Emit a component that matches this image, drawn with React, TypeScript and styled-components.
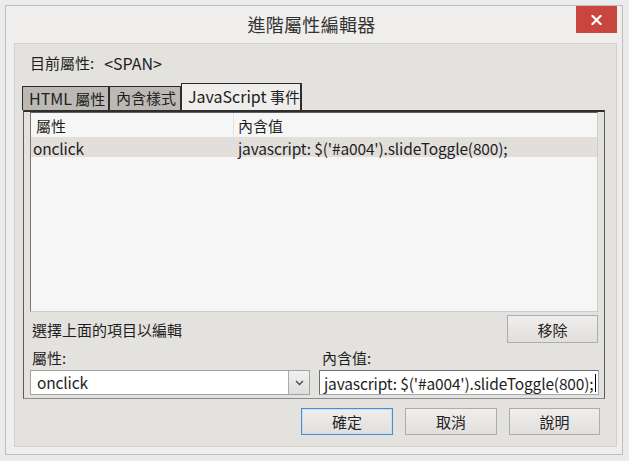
import React from "react";
import styled, { createGlobalStyle } from "styled-components";

const GlobalStyle = createGlobalStyle`
  html, body { margin: 0; padding: 0; }
  body {
    background: #ebebeb;
    font-family: "Noto Sans CJK TC", "Noto Sans", sans-serif;
    color: #1e1e1e;
  }
  * { box-sizing: border-box; }
`;

const Page = styled.div`
  width: 629px;
  height: 461px;
  padding: 5px 0 0 5px;
  overflow: hidden;
`;

const Window = styled.div`
  width: 618px;
  height: 450px;
  border: 1px solid #bdbdbd;
  background: #efeeec;
  display: flex;
  flex-direction: column;
`;

const TitleBar = styled.div`
  height: 37px;
  display: grid;
  grid-template-columns: 1fr auto 1fr;
  align-items: start;
  padding-right: 5px;
`;

const Title = styled.div`
  grid-column: 2;
  font-size: 18px;
  line-height: 37px;
  color: #333;
  letter-spacing: 0.3px;
`;

const CloseButton = styled.div`
  grid-column: 3;
  justify-self: end;
  width: 41px;
  height: 27px;
  background: #c8463d;
  display: flex;
  align-items: center;
  justify-content: center;
`;

const Client = styled.div`
  flex: 1;
  margin: 0 5px 7px 8px;
  background: #e4e2df;
  border: 1px solid #d3d1ce;
  display: flex;
  flex-direction: column;
`;

const CurrentLine = styled.div`
  margin-top: 8px;
  padding-left: 15px;
  height: 22px;
  line-height: 22px;
  font-size: 15px;
  display: flex;
  gap: 10px;
`;

const TagText = styled.span`
  font-size: 16px;
`;

const TabStrip = styled.div`
  margin-top: 9px;
  margin-left: 7px;
  height: 27px;
  display: flex;
  align-items: flex-end;
`;

const Tab = styled.div<{ $active?: boolean; $w: number }>`
  width: ${(p) => p.$w}px;
  height: ${(p) => (p.$active ? 27 : 24)}px;
  background: ${(p) => (p.$active ? "#efeeec" : "#bcb9b5")};
  border: 1px solid #2c2c2c;
  border-right-width: 2px;
  border-bottom: none;
  margin-right: -1px;
  font-size: 15px;
  line-height: ${(p) => (p.$active ? 25 : 22)}px;
  padding-left: 6px;
  color: #202020;
  white-space: nowrap;
  position: relative;
  z-index: ${(p) => (p.$active ? 1 : 0)};
`;

const TabLatin = styled.span`
  font-size: 16px;
`;

const Panel = styled.div`
  margin-left: 8px;
  width: 582px;
  border-top: 2px solid #2e2e2e;
  border-left: 1px solid #5a5a5a;
  border-right: 1px solid #5a5a5a;
  border-bottom: 1px solid #8c8c8c;
  padding: 0 6px 3px 6px;
  display: flex;
  flex-direction: column;
`;

const List = styled.div`
  height: 200px;
  background: #f6f6f6;
  border-top: 1px solid #5e5e5e;
  border-left: 1px solid #7a7a7a;
  border-right: 1px solid #cdcdcd;
  border-bottom: 1px solid #cdcdcd;
  display: flex;
  flex-direction: column;
`;

const ListRow = styled.div<{ $selected?: boolean; $h: number }>`
  display: grid;
  grid-template-columns: 203px 1fr;
  height: ${(p) => p.$h}px;
  background: ${(p) => (p.$selected ? "#e2dfdb" : "transparent")};
  align-items: center;
`;

const HeadCell = styled.div<{ $divider?: boolean; $pad: number }>`
  height: 100%;
  display: flex;
  align-items: center;
  padding-left: ${(p) => p.$pad}px;
  font-size: 15px;
  border-right: ${(p) => (p.$divider ? "1px solid #e2e2e2" : "none")};
`;

const Cell = styled.div<{ $pad: number }>`
  padding-left: ${(p) => p.$pad}px;
  font-size: 15.5px;
  letter-spacing: -0.15px;
  white-space: nowrap;
`;

const ActionRow = styled.div`
  margin-top: 3px;
  height: 28px;
  display: flex;
  align-items: center;
  justify-content: space-between;
  padding-left: 2px;
  font-size: 15px;
`;

const Button = styled.div<{ $default?: boolean; $w: number; $h: number }>`
  width: ${(p) => p.$w}px;
  height: ${(p) => p.$h}px;
  border: 1px solid ${(p) => (p.$default ? "#4f8cc9" : "#adadad")};
  box-shadow: ${(p) => (p.$default ? "inset 0 0 0 1px #bfe0f5" : "none")};
  background: linear-gradient(#efeeed, #e1dfdc);
  display: flex;
  align-items: center;
  justify-content: center;
  font-size: 15px;
  color: #222;
`;

const FieldGrid = styled.div`
  margin-top: 5px;
  display: grid;
  grid-template-columns: 280px 280px;
  column-gap: 9px;
`;

const Field = styled.div`
  display: flex;
  flex-direction: column;
`;

const FieldLabel = styled.div<{ $pad: number }>`
  height: 20px;
  line-height: 20px;
  font-size: 15px;
  padding-left: ${(p) => p.$pad}px;
  margin-bottom: 2px;
`;

const SelectBox = styled.div`
  height: 25px;
  background: #fff;
  border: 1px solid #a3a3a3;
  display: flex;
  align-items: stretch;
`;

const SelectValue = styled.div`
  flex: 1;
  padding-left: 6px;
  font-size: 15.5px;
  letter-spacing: -0.15px;
  line-height: 23px;
`;

const DropButton = styled.div`
  width: 21px;
  border-left: 1px solid #a9a9a9;
  background: linear-gradient(#f1f1f1, #dedede);
  display: flex;
  align-items: center;
  justify-content: center;
`;

const TextInput = styled.div`
  height: 25px;
  background: #fff;
  border: 1px solid #6e6e6e;
  border-bottom-color: #a8a8a8;
  border-right-color: #a8a8a8;
  padding-left: 4px;
  display: flex;
  align-items: center;
  overflow: hidden;
  font-size: 15.5px;
  letter-spacing: -0.15px;
  white-space: nowrap;
`;

const Caret = styled.span`
  display: inline-block;
  flex: none;
  width: 1px;
  height: 18px;
  background: #000;
  margin-left: 1px;
`;

const ButtonRow = styled.div`
  margin-top: 9px;
  padding-right: 16px;
  display: flex;
  justify-content: flex-end;
  gap: 12px;
`;

export default function App() {
  return (
    <>
      <GlobalStyle />
      <Page>
        <Window>
          <TitleBar>
            <Title>進階屬性編輯器</Title>
            <CloseButton>
              <svg width="11" height="10" viewBox="0 0 11 10">
                <path d="M1.5 1 L9.5 9 M9.5 1 L1.5 9" stroke="#fff" strokeWidth="2.2" strokeLinecap="square" />
              </svg>
            </CloseButton>
          </TitleBar>
          <Client>
            <CurrentLine>
              <span>目前屬性:</span>
              <TagText>&lt;SPAN&gt;</TagText>
            </CurrentLine>
            <TabStrip>
              <Tab $w={88}>
                <TabLatin>HTML</TabLatin> 屬性
              </Tab>
              <Tab $w={73}>內含樣式</Tab>
              <Tab $w={121} $active>
                <TabLatin>JavaScript</TabLatin> 事件
              </Tab>
            </TabStrip>
            <Panel>
              <List>
                <ListRow $h={24}>
                  <HeadCell $pad={5} $divider>屬性</HeadCell>
                  <HeadCell $pad={4}>內含值</HeadCell>
                </ListRow>
                <ListRow $h={20} $selected>
                  <Cell $pad={2}>onclick</Cell>
                  <Cell $pad={4}>javascript: $('#a004').slideToggle(800);</Cell>
                </ListRow>
              </List>
              <ActionRow>
                <span>選擇上面的項目以編輯</span>
                <Button $w={91} $h={28}>移除</Button>
              </ActionRow>
              <FieldGrid>
                <Field>
                  <FieldLabel $pad={2}>屬性:</FieldLabel>
                  <SelectBox>
                    <SelectValue>onclick</SelectValue>
                    <DropButton>
                      <svg width="9" height="6" viewBox="0 0 9 6">
                        <path d="M1 1 L4.5 4.5 L8 1" fill="none" stroke="#4a4a4a" strokeWidth="1.4" />
                      </svg>
                    </DropButton>
                  </SelectBox>
                </Field>
                <Field>
                  <FieldLabel $pad={3}>內含值:</FieldLabel>
                  <TextInput>
                    <span>javascript: $('#a004').slideToggle(800);</span>
                    <Caret />
                  </TextInput>
                </Field>
              </FieldGrid>
            </Panel>
            <ButtonRow>
              <Button $w={92} $h={27} $default>確定</Button>
              <Button $w={92} $h={27}>取消</Button>
              <Button $w={91} $h={27}>說明</Button>
            </ButtonRow>
          </Client>
        </Window>
      </Page>
    </>
  );
}
